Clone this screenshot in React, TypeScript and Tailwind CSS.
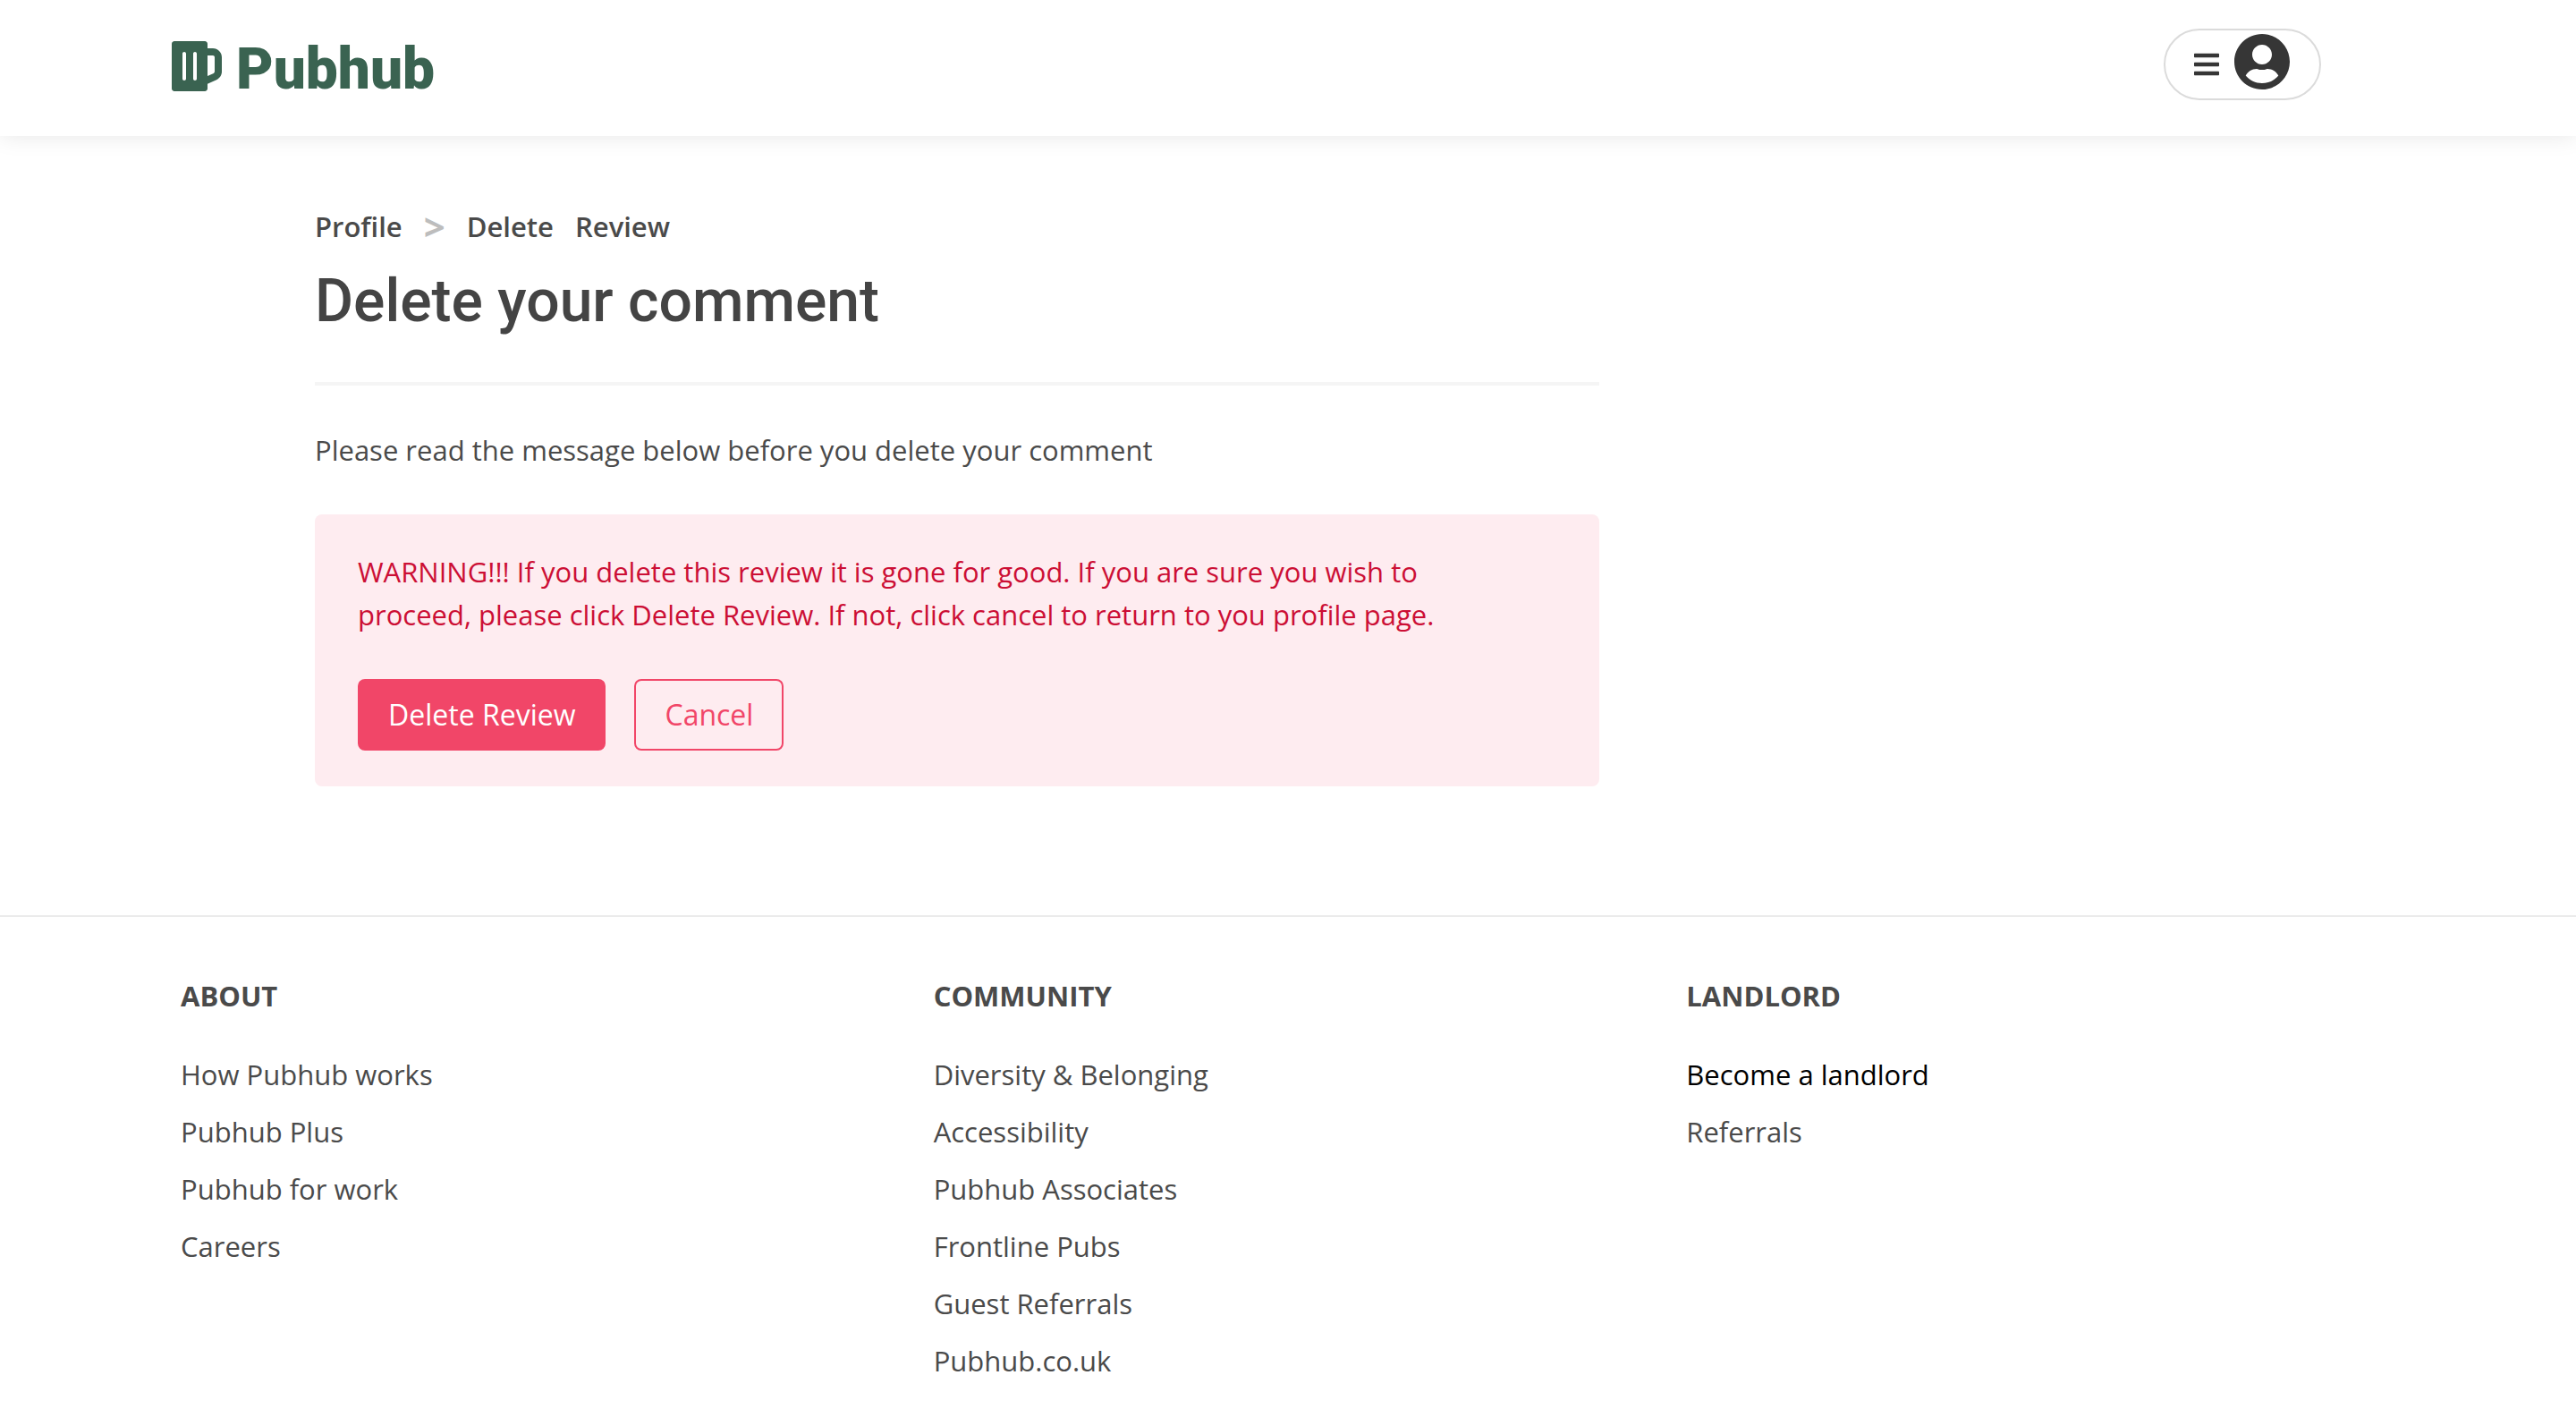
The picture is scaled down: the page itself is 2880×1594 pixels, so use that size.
import { FaBars, FaBeer, FaUserCircle } from "react-icons/fa";

type LinkItem = { label: string; active?: boolean };

const footerColumns: { title: string; links: LinkItem[] }[] = [
  {
    title: "ABOUT",
    links: [
      { label: "How Pubhub works" },
      { label: "Pubhub Plus" },
      { label: "Pubhub for work" },
      { label: "Careers" },
    ],
  },
  {
    title: "COMMUNITY",
    links: [
      { label: "Diversity & Belonging" },
      { label: "Accessibility" },
      { label: "Pubhub Associates" },
      { label: "Frontline Pubs" },
      { label: "Guest Referrals" },
      { label: "Pubhub.co.uk" },
    ],
  },
  {
    title: "LANDLORD",
    links: [{ label: "Become a landlord", active: true }, { label: "Referrals" }],
  },
];

function Header() {
  return (
    <header className="flex items-start justify-between bg-white pt-8 pr-[285px] pb-9 pl-[188px] shadow-[0_0_24px_rgba(0,0,0,0.1)]">
      <a href="#" className="flex h-[84px] items-center gap-3 text-[#3a6351]">
        <FaBeer className="size-16" aria-hidden="true" />
        <span className="pt-2 font-['Roboto',sans-serif] text-[64px] leading-[80px] font-black">Pubhub</span>
      </a>
      <button
        type="button"
        aria-label="Open menu"
        className="flex h-20 items-start gap-4 rounded-full border-2 border-[#dbdbdb] px-8 text-[#363636]"
      >
        <FaBars className="mt-[22px] h-8 w-7" aria-hidden="true" />
        <FaUserCircle className="mt-[3px] size-16" aria-hidden="true" />
      </button>
    </header>
  );
}

function Breadcrumb() {
  return (
    <nav aria-label="Breadcrumb">
      <ol className="flex items-center font-semibold">
        <li>
          <a href="#">Profile</a>
        </li>
        <li aria-hidden="true" className="px-6 text-[42px] leading-[44px] font-bold text-[#bdbdbd]">
          &gt;
        </li>
        <li className="flex gap-6">
          <span>Delete</span>
          <span>Review</span>
        </li>
      </ol>
    </nav>
  );
}

function Footer() {
  return (
    <footer className="grid grid-cols-3 border-t-2 border-[#ebebeb] pt-16 pr-[153px] pb-12 pl-[202px]">
      {footerColumns.map((column) => (
        <section key={column.title}>
          <h2 className="font-bold">{column.title}</h2>
          <ul className="mt-10 flex flex-col gap-4">
            {column.links.map((link) => (
              <li key={link.label}>
                <a href="#" className={link.active ? "text-black" : ""}>
                  {link.label}
                </a>
              </li>
            ))}
          </ul>
        </section>
      ))}
    </footer>
  );
}

export default function App() {
  return (
    <div className="min-h-screen bg-white font-['Open_Sans',sans-serif] text-[31px] leading-[48px] text-[#4a4a4a]">
      <Header />
      <main className="px-[352px] pt-[77px] pb-36">
        <div className="w-[66%]">
          <Breadcrumb />
          <h1 className="mt-5 font-['Roboto',sans-serif] text-[66px] leading-[80px] font-medium text-[#444444]">
            Delete your comment
          </h1>
          <hr className="mt-[50px] h-1 border-0 bg-[#f5f5f5]" />
          <p className="mt-12">Please read the message below before you delete your comment</p>
          <section className="mt-12 rounded-lg bg-[#feecf0] pt-10 pr-24 pb-10 pl-12">
            <p className="text-[#cc0f35]">
              WARNING!!! If you delete this review it is gone for good. If you are sure you wish to proceed, please
              click Delete Review. If not, click cancel to return to you profile page.
            </p>
            <div className="mt-12 flex gap-8 text-[32px]">
              <button type="button" className="h-20 rounded-lg border-2 border-[#f14668] bg-[#f14668] px-8 text-white">
                Delete Review
              </button>
              <button type="button" className="h-20 rounded-lg border-2 border-[#f14668] px-8 text-[#f14668]">
                Cancel
              </button>
            </div>
          </section>
        </div>
      </main>
      <Footer />
    </div>
  );
}
